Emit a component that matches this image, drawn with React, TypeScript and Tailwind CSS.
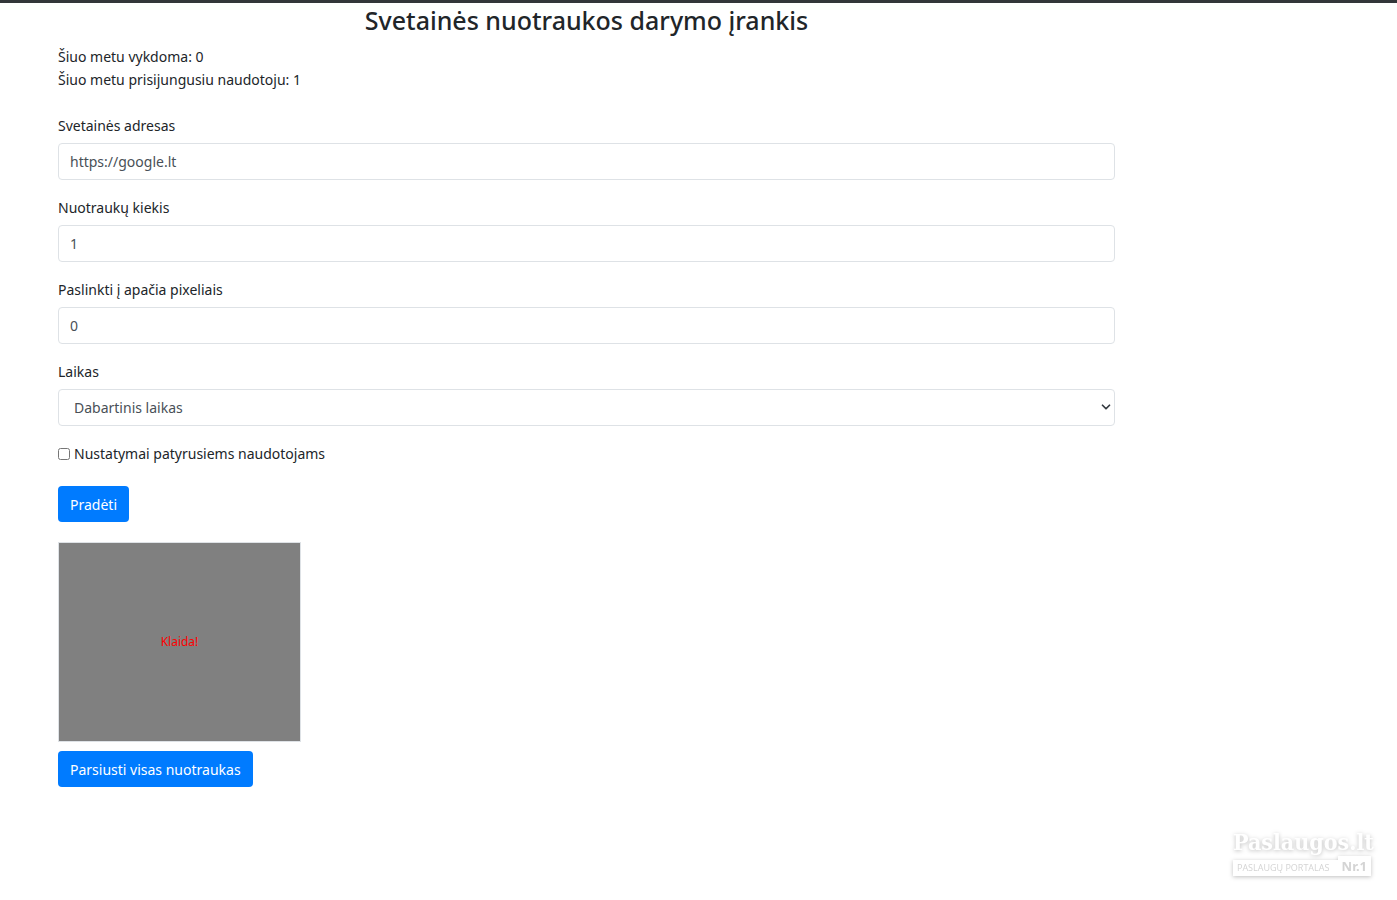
import type { ReactNode } from "react";
import { ChevronDown } from "lucide-react";

const fields = [
  { id: "url", label: "Svetainės adresas", value: "https://google.lt" },
  { id: "count", label: "Nuotraukų kiekis", value: "1" },
  { id: "scroll", label: "Paslinkti į apačia pixeliais", value: "0" },
];

export default function App() {
  return (
    <div className="min-h-screen border-t-3 border-[#33363a] bg-white px-[58px] font-['Noto_Sans','Open_Sans',sans-serif] text-[14px] leading-[23px] text-[#212529]">
      <main className="max-w-[1057px]">
        <h1 className="mb-2 text-center text-[25px] font-medium leading-[34px]">Svetainės nuotraukos darymo įrankis</h1>
        <p>Šiuo metu vykdoma: 0</p>
        <p>Šiuo metu prisijungusiu naudotoju: 1</p>

        <form className="mt-[23px]">
          {fields.map((field) => (
            <FormGroup key={field.id} id={field.id} label={field.label}>
              <input
                id={field.id}
                type="text"
                defaultValue={field.value}
                className="h-[37px] w-full rounded border border-[#dee2e6] bg-white px-[11px] text-[#495057]"
              />
            </FormGroup>
          ))}
          <FormGroup id="time" label="Laikas">
            <div className="relative">
              <select
                id="time"
                className="h-[37px] w-full appearance-none rounded border border-[#dee2e6] bg-white px-[15px] text-[#495057]"
              >
                <option>Dabartinis laikas</option>
              </select>
              <ChevronDown className="pointer-events-none absolute right-0.5 top-[11px] size-3.5 text-[#343a40]" strokeWidth={3} />
            </div>
          </FormGroup>

          <div className="mb-[21px] flex items-center gap-1">
            <input id="advanced" type="checkbox" className="size-3" />
            <label htmlFor="advanced">Nustatymai patyrusiems naudotojams</label>
          </div>
          <PrimaryButton>Pradėti</PrimaryButton>
        </form>

        <div className="mb-[9px] mt-5 flex h-[200px] w-[243px] items-center justify-center border border-[#dee2e6] bg-[#808080] text-xs text-[#ff0000]">
          Klaida!
        </div>
        <PrimaryButton>Parsiusti visas nuotraukas</PrimaryButton>
      </main>
      <Watermark />
    </div>
  );
}

type FormGroupProps = {
  id: string;
  label: string;
  children: ReactNode;
};

function FormGroup({ id, label, children }: FormGroupProps) {
  return (
    <div className="mb-4">
      <label htmlFor={id} className="mb-1.5 block">
        {label}
      </label>
      {children}
    </div>
  );
}

function PrimaryButton({ children }: { children: ReactNode }) {
  return (
    <button type="button" className="block h-9 rounded bg-[#007bff] px-3 text-white">
      {children}
    </button>
  );
}

function Watermark() {
  return (
    <div className="fixed bottom-6 right-[26px] flex w-[138px] flex-col text-[#d4d4d4] drop-shadow-[0_1px_2px_rgba(0,0,0,0.25)]">
      <div className="whitespace-nowrap font-['DejaVu_Serif_Condensed','DejaVu_Serif',serif] text-[23px] font-bold leading-7 text-white">Paslaugos.lt</div>
      <div className="flex items-end">
        <span className="h-4 flex-1 whitespace-nowrap bg-white pl-1 font-['Open_Sans',sans-serif] text-[9px] leading-4">PASLAUGŲ PORTALAS</span>
        <span className="h-5 bg-white px-1 text-[13px] font-bold leading-5">Nr.1</span>
      </div>
    </div>
  );
}
